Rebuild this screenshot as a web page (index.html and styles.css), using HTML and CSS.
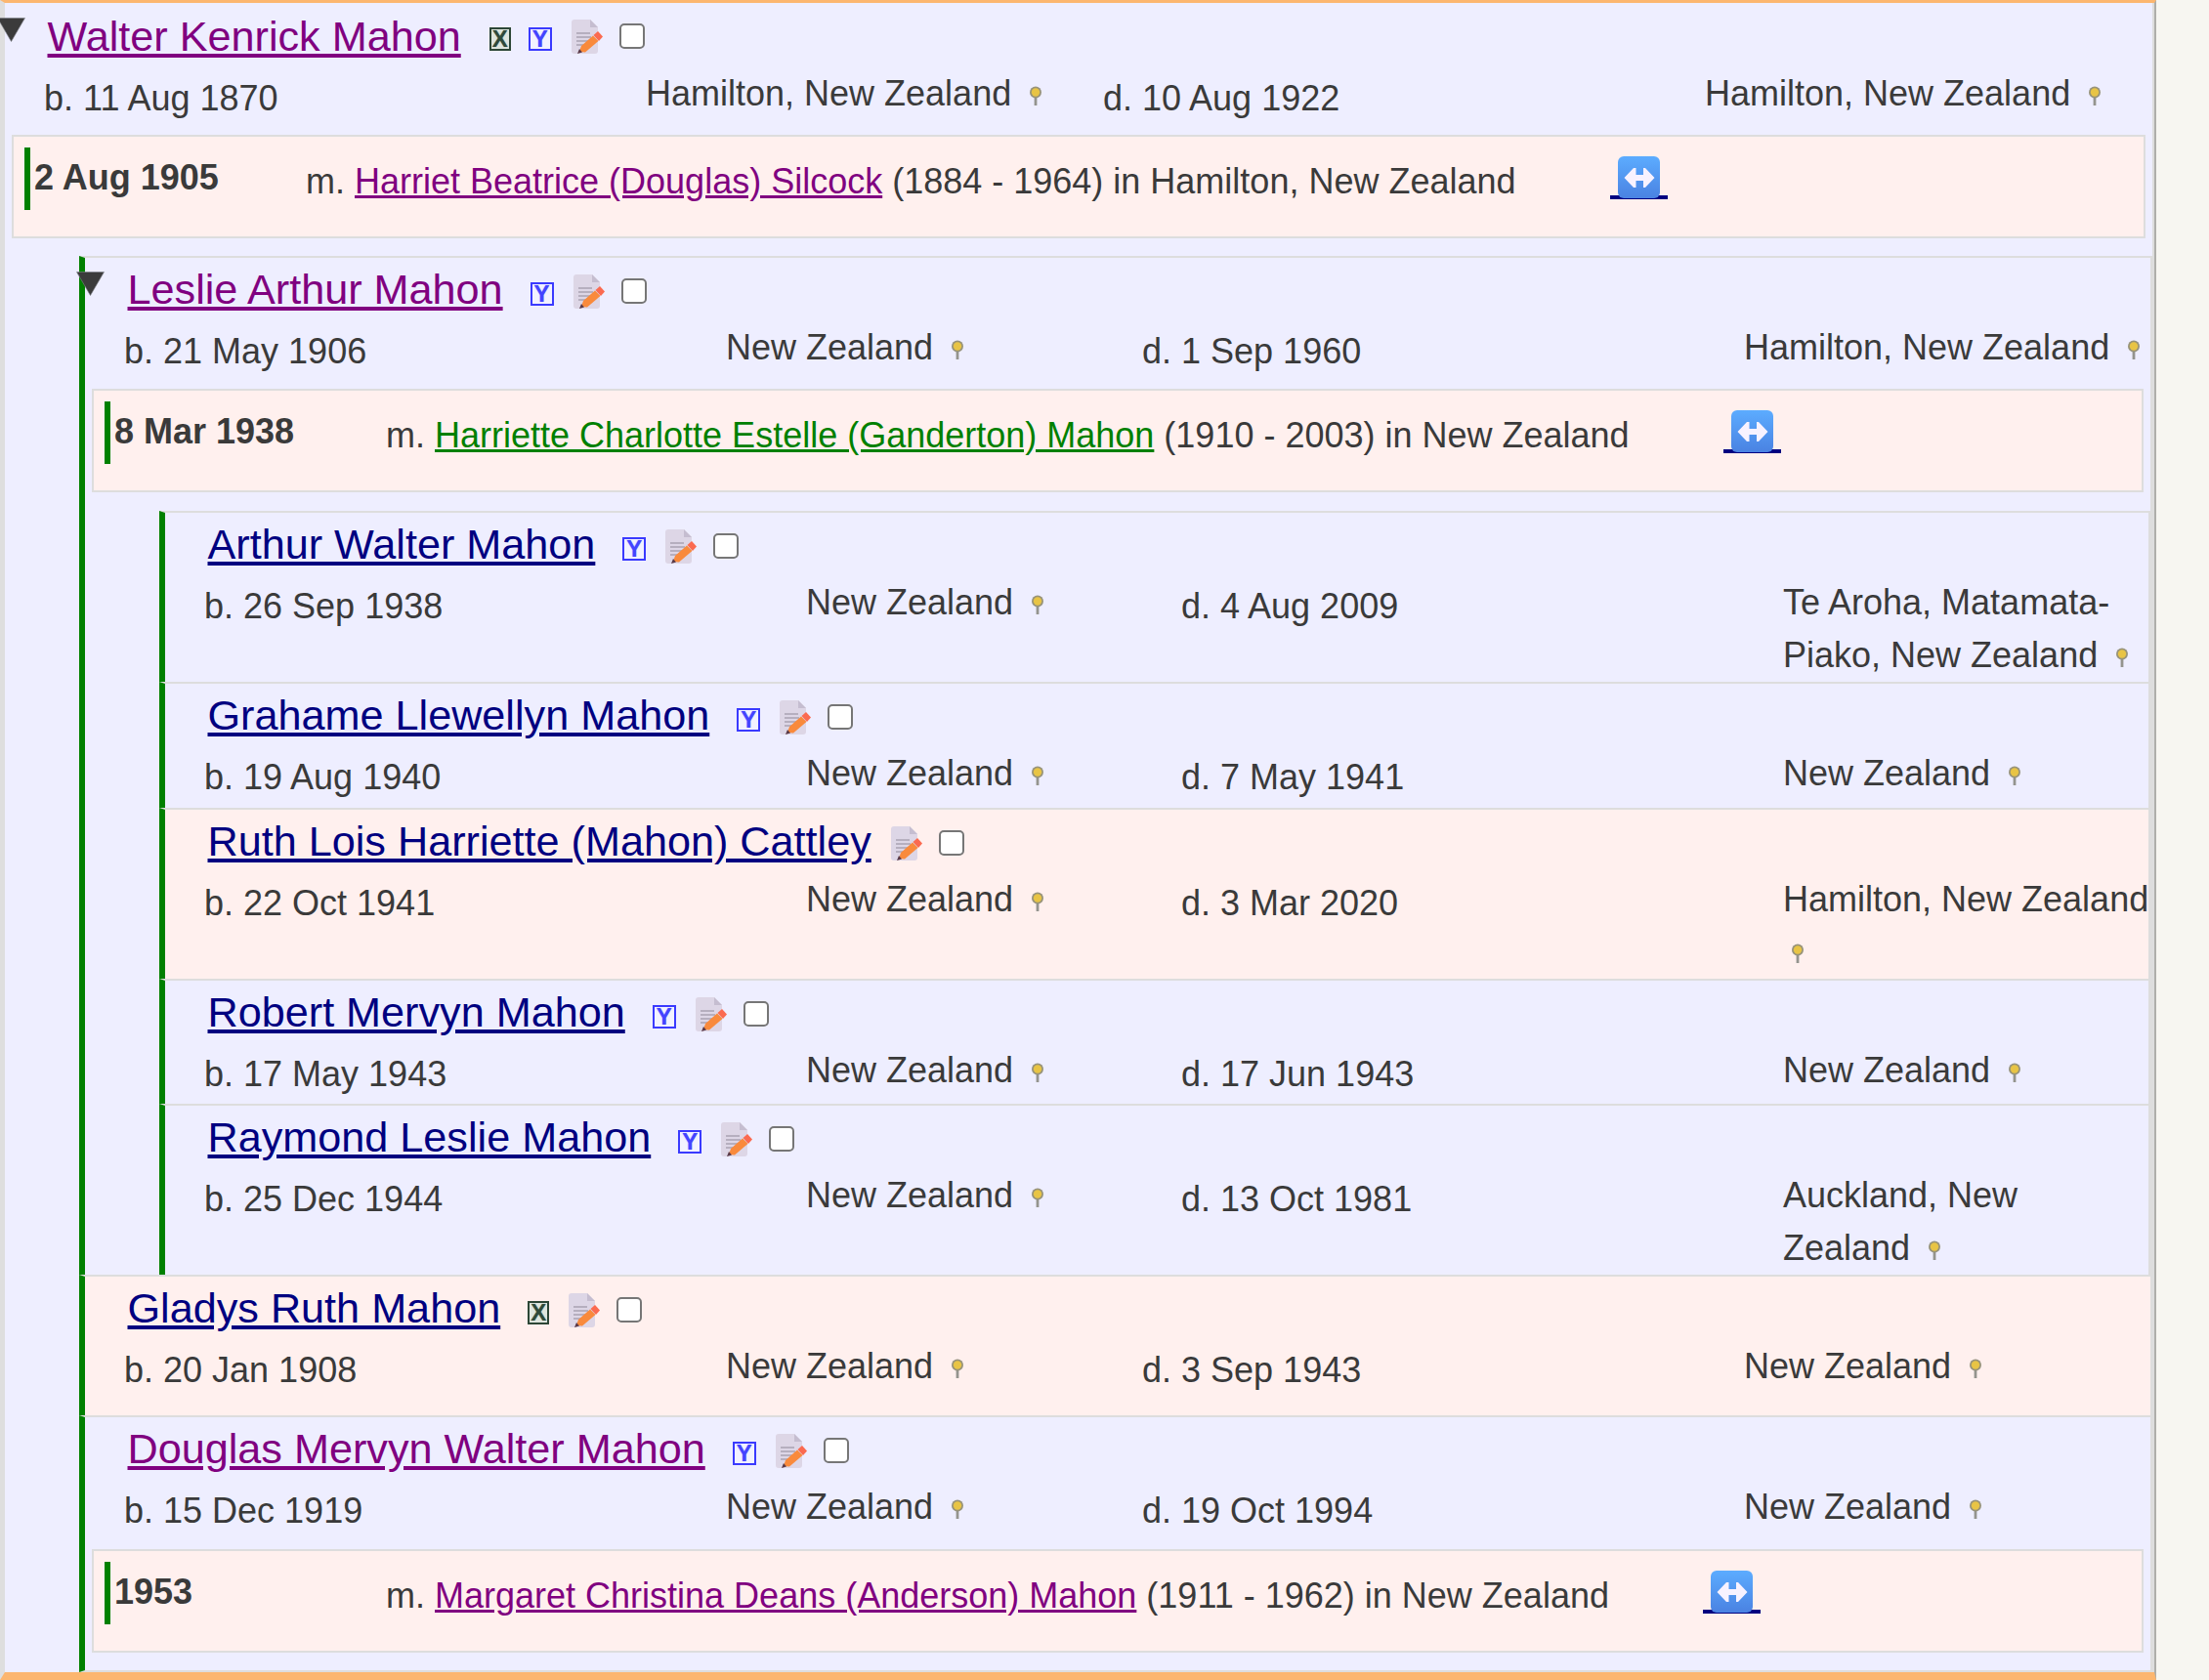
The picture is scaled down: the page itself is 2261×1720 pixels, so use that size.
FILE: index.html
```html
<!DOCTYPE html>
<html lang="en">
<head>
	<meta charset="UTF-8">
	<title>Descendants of Walter Kenrick Mahon</title>
	<link rel="stylesheet" href="styles.css">
</head>
<body>
	<svg class="Defs" width="0" height="0">
		<symbol id="tri" viewBox="0 0 29 25"><path d="M0.5 0.5H28.5L14.5 24.5Z" fill="#3b3b3b" stroke="#7d8288" stroke-width="0.6"/></symbol>
		<symbol id="pin" viewBox="0 0 14 20"><rect x="5.6" y="8" width="2.8" height="12" fill="#94948e"/><circle cx="7" cy="6.5" r="6" fill="#97937a"/><circle cx="7" cy="6.5" r="4.2" fill="#e8c445"/></symbol>
		<symbol id="doc" viewBox="0 0 32 35">
			<path d="M0 3Q0 0 3 0H19L27 8V32Q27 35 24 35H3Q0 35 0 32Z" fill="#ddd6e6"/>
			<path d="M19 0L27 8H19Z" fill="#c5bdd0"/>
			<path d="M5 14H19M5 18H20M5 22H17M5 26H13" stroke="#a9a3b2" stroke-width="1.4"/>
			<path d="M8 33L10 27L22 16.5L27.5 22L14 33.5Z" fill="#f98a3c"/>
			<path d="M22.5 16L27 12L32 17.5L28 22Z" fill="#fb6a50"/>
			<path d="M6 35L8 30L11 33.5Z" fill="#5a3a48"/>
		</symbol>
		<symbol id="swap" viewBox="0 0 43 43">
			<defs><linearGradient id="swapFill" x1="0" y1="0" x2="0" y2="1"><stop offset="0" stop-color="#5cacff"/><stop offset="1" stop-color="#4a82e2"/></linearGradient></defs>
			<rect width="43" height="43" rx="6" fill="url(#swapFill)"/>
			<path d="M6.5 22L16 12H18.5V19H26V12H28L37.5 22L28 32H26V25H18.5V32H16Z" fill="#f8f2ff"/>
		</symbol>
	</svg>

	<div id="Tree">
		<ul class="List">
			<li class="Person Root">
				<svg class="Toggle"><use href="#tri"/></svg>
				<div class="NameRow">
					<a class="Name Visited" href="#">Walter Kenrick Mahon</a>
					<span class="Badge BadgeX">X</span><span class="Badge BadgeY">Y</span>
					<svg class="Doc"><use href="#doc"/></svg><input class="Check" type="checkbox">
				</div>
				<div class="Info">
					<div class="When">b. 11 Aug 1870</div>
					<div class="Where">Hamilton, New Zealand <svg class="Pin"><use href="#pin"/></svg></div>
					<div class="When">d. 10 Aug 1922</div>
					<div class="Where">Hamilton, New Zealand <svg class="Pin"><use href="#pin"/></svg></div>
				</div>
				<div class="Marriage">
					<div class="MDate">2 Aug 1905</div>
					<div class="MText">m. <a class="Visited" href="#">Harriet Beatrice (Douglas) Silcock</a> (1884 - 1964) in Hamilton, New Zealand<a class="Swap" href="#"><svg><use href="#swap"/></svg></a></div>
				</div>

				<ul class="List Sub">
					<li class="Person">
						<svg class="Toggle"><use href="#tri"/></svg>
						<div class="NameRow">
							<a class="Name Visited" href="#">Leslie Arthur Mahon</a>
							<span class="Badge BadgeY First">Y</span>
							<svg class="Doc"><use href="#doc"/></svg><input class="Check" type="checkbox">
						</div>
						<div class="Info">
							<div class="When">b. 21 May 1906</div>
							<div class="Where">New Zealand <svg class="Pin"><use href="#pin"/></svg></div>
							<div class="When">d. 1 Sep 1960</div>
							<div class="Where">Hamilton, New Zealand <svg class="Pin"><use href="#pin"/></svg></div>
						</div>
						<div class="Marriage">
							<div class="MDate">8 Mar 1938</div>
							<div class="MText">m. <a class="Current" href="#">Harriette Charlotte Estelle (Ganderton) Mahon</a> (1910 - 2003) in New Zealand<a class="Swap" href="#"><svg><use href="#swap"/></svg></a></div>
						</div>

						<ul class="List Sub">
							<li class="Person">
								<div class="NameRow">
									<a class="Name" href="#">Arthur Walter Mahon</a>
									<span class="Badge BadgeY First">Y</span>
									<svg class="Doc"><use href="#doc"/></svg><input class="Check" type="checkbox">
								</div>
								<div class="Info">
									<div class="When">b. 26 Sep 1938</div>
									<div class="Where">New Zealand <svg class="Pin"><use href="#pin"/></svg></div>
									<div class="When">d. 4 Aug 2009</div>
									<div class="Where">Te Aroha, Matamata-Piako, New Zealand <svg class="Pin"><use href="#pin"/></svg></div>
								</div>
							</li>
							<li class="Person">
								<div class="NameRow">
									<a class="Name" href="#">Grahame Llewellyn Mahon</a>
									<span class="Badge BadgeY First">Y</span>
									<svg class="Doc"><use href="#doc"/></svg><input class="Check" type="checkbox">
								</div>
								<div class="Info">
									<div class="When">b. 19 Aug 1940</div>
									<div class="Where">New Zealand <svg class="Pin"><use href="#pin"/></svg></div>
									<div class="When">d. 7 May 1941</div>
									<div class="Where">New Zealand <svg class="Pin"><use href="#pin"/></svg></div>
								</div>
							</li>
							<li class="Person Female">
								<div class="NameRow">
									<a class="Name" href="#">Ruth Lois Harriette (Mahon) Cattley</a>
									<svg class="Doc"><use href="#doc"/></svg><input class="Check" type="checkbox">
								</div>
								<div class="Info">
									<div class="When">b. 22 Oct 1941</div>
									<div class="Where">New Zealand <svg class="Pin"><use href="#pin"/></svg></div>
									<div class="When">d. 3 Mar 2020</div>
									<div class="Where">Hamilton, New Zealand <svg class="Pin"><use href="#pin"/></svg></div>
								</div>
							</li>
							<li class="Person">
								<div class="NameRow">
									<a class="Name" href="#">Robert Mervyn Mahon</a>
									<span class="Badge BadgeY First">Y</span>
									<svg class="Doc"><use href="#doc"/></svg><input class="Check" type="checkbox">
								</div>
								<div class="Info">
									<div class="When">b. 17 May 1943</div>
									<div class="Where">New Zealand <svg class="Pin"><use href="#pin"/></svg></div>
									<div class="When">d. 17 Jun 1943</div>
									<div class="Where">New Zealand <svg class="Pin"><use href="#pin"/></svg></div>
								</div>
							</li>
							<li class="Person">
								<div class="NameRow">
									<a class="Name" href="#">Raymond Leslie Mahon</a>
									<span class="Badge BadgeY First">Y</span>
									<svg class="Doc"><use href="#doc"/></svg><input class="Check" type="checkbox">
								</div>
								<div class="Info">
									<div class="When">b. 25 Dec 1944</div>
									<div class="Where">New Zealand <svg class="Pin"><use href="#pin"/></svg></div>
									<div class="When">d. 13 Oct 1981</div>
									<div class="Where">Auckland, New Zealand <svg class="Pin"><use href="#pin"/></svg></div>
								</div>
							</li>
						</ul>
					</li>
					<li class="Person Female Leaf">
						<div class="NameRow">
							<a class="Name" href="#">Gladys Ruth Mahon</a>
							<span class="Badge BadgeX First">X</span>
							<svg class="Doc"><use href="#doc"/></svg><input class="Check" type="checkbox">
						</div>
						<div class="Info">
							<div class="When">b. 20 Jan 1908</div>
							<div class="Where">New Zealand <svg class="Pin"><use href="#pin"/></svg></div>
							<div class="When">d. 3 Sep 1943</div>
							<div class="Where">New Zealand <svg class="Pin"><use href="#pin"/></svg></div>
						</div>
					</li>
					<li class="Person Last">
						<div class="NameRow">
							<a class="Name Visited" href="#">Douglas Mervyn Walter Mahon</a>
							<span class="Badge BadgeY First">Y</span>
							<svg class="Doc"><use href="#doc"/></svg><input class="Check" type="checkbox">
						</div>
						<div class="Info">
							<div class="When">b. 15 Dec 1919</div>
							<div class="Where">New Zealand <svg class="Pin"><use href="#pin"/></svg></div>
							<div class="When">d. 19 Oct 1994</div>
							<div class="Where">New Zealand <svg class="Pin"><use href="#pin"/></svg></div>
						</div>
						<div class="Marriage">
							<div class="MDate">1953</div>
							<div class="MText">m. <a class="Visited" href="#">Margaret Christina Deans (Anderson) Mahon</a> (1911 - 1962) in New Zealand<a class="Swap" href="#"><svg><use href="#swap"/></svg></a></div>
						</div>
					</li>
				</ul>
			</li>
		</ul>
	</div>
</body>
</html>
```
FILE: styles.css
```css
body,ul,li{
	margin: 0;padding: 0;
}
body{
	background: #f7f6f1;
	color: #3a3a3a;
	font: 36px/54px "Liberation Sans",Arial,sans-serif;
	overflow-x: hidden;
}
ul{
	list-style: none;
}
a{
	color: #000080;
}
.Defs{
	position: absolute;
}
#Tree{
	box-sizing: border-box;
	width: 2207px;
	background: #eeeeff;
	border-top: 3px solid #fcb66f;
	border-bottom: 8px solid #fcb66f;
	border-left: 5px solid #dedede;
	border-right: 2px solid #aeaeaa;
}
.Visited{
	color: #800080;
}
.Current{
	color: #008000;
}
.Person{
	position: relative;
	border-top: 2px solid #dddddd;
	border-left: 6px solid #008000;
	border-right: 2px solid #dddddd;
}
.Root{
	border-top: none;
	border-left: none;
}
.Female{
	background: #fff0ee;
}
.Leaf{
	padding-bottom: 15px;
}
.Last{
	border-bottom: 2px solid #dddddd;
}
.Sub{
	margin-left: 76px;
}
.Toggle{
	position: absolute;
	left: -9px;top: 14px;
	width: 29px;height: 25px;
}
.Root > .Toggle{
	left: -8px;top: 15px;
}
.NameRow{
	box-sizing: border-box;
	display: flex;
	align-items: center;
	height: 64px;
	padding: 4px 0 0 43.5px;
}
.Root > .NameRow{
	height: 66px;
	padding-bottom: 3px;
}
.Name{
	margin-bottom: 4px;
	font-size: 43.2px;
	line-height: 54px;
	white-space: nowrap;
}
.Root > .NameRow > .Name{
	margin-bottom: 0;
}
.Badge{
	box-sizing: border-box;
	display: block;
	width: 24px;height: 24px;
	margin-left: 18px;margin-top: 6px;
	font-size: 24px;font-weight: bold;line-height: 20px;text-align: center;
}
.BadgeX{
	width: 22px;
	margin-left: 29px;
	color: #2f4a3a;
	background: #dfe6df;
	border: 2px solid #2c4636;
	text-shadow: 0 0 1px #7f9488;
}
.BadgeY{
	color: #4444ff;
	background: #f2f2ff;
	border: 2px solid #3a3aff;
	text-shadow: 0 0 1px #8888ff;
}
.First{
	margin-left: 28px;
}
.Doc{
	width: 32px;height: 35px;
	margin-left: 20px;margin-top: 1px;
}
.Check{
	appearance: none;
	box-sizing: border-box;
	width: 26px;height: 26px;
	margin: 0 0 0 17px;
	background: #fff;
	border: 2px solid #767676;
	border-radius: 5px;
}
.Info{
	display: grid;
	grid-template-columns: 616px 384px 616px 376px;
	padding: 0 0 0.4px 40px;
}
.Root > .Info{
	grid-template-columns: 616px 468px 616px 456px;
}
.Root > .Sub > .Person > .Info{
	grid-template-columns: 616px 426px 616px 414px;
}
.When{
	padding-top: 5px;
	height: 57px;
}
.Where{
	padding: 1px 0 0.6px;
	line-height: 53.5px;
}
.Root > .Info > .Where{
	padding-top: 0;
}
.Pin{
	width: 14px;height: 20px;
	margin-left: 8px;
	vertical-align: 0;
}
.Marriage{
	box-sizing: border-box;
	display: flex;
	height: 106px;
	margin: 8px 7px 19px 7px;
	padding: 11px 0 0 11px;
	background: #fff0ee;
	border: 2px solid #dddddd;
}
.Root > .Marriage{
	margin-top: 6.6px;
	margin-bottom: 18px;
}
.Last > .Marriage{
	margin-top: 9px;
	margin-bottom: 18px;
}
.MDate{
	box-sizing: border-box;
	flex: none;
	width: 288px;height: 64px;
	padding: 4px 0 0 4px;
	border-left: 6px solid #008000;
	font-weight: bold;
}
.MText{
	padding-top: 8px;
	white-space: nowrap;
}
.Swap{
	position: relative;
	display: inline-block;
	box-sizing: border-box;
	width: 59px;height: 44px;
	margin-left: 96px;
	border-bottom: 4px solid #000080;
	vertical-align: -6px;
}
.Swap svg{
	position: absolute;
	left: 8px;top: 0;
	width: 43px;height: 43px;
}
```
